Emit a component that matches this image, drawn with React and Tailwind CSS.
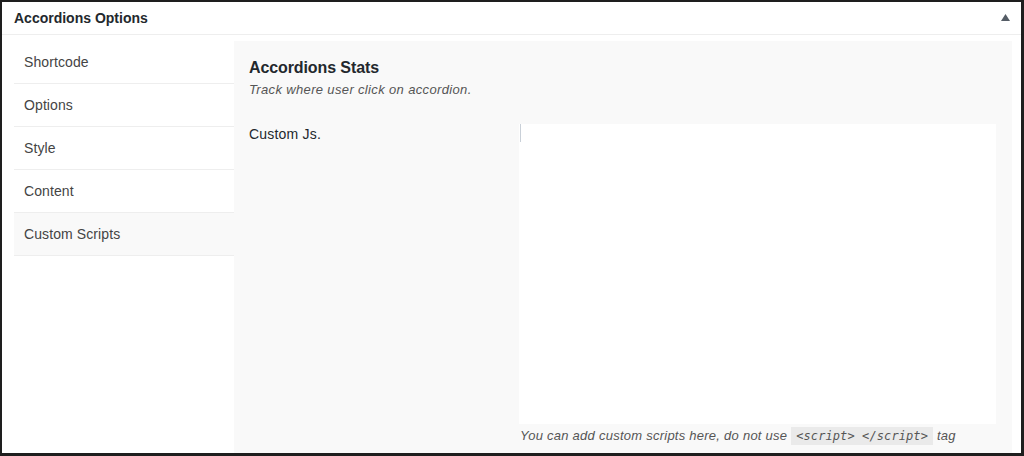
import React from 'react'

// ── Tabs ───────────────────────────────────────────────────────────────────────
const TABS = ['Shortcode', 'Options', 'Style', 'Content', 'Custom Scripts']
const ACTIVE = 'Custom Scripts'

const font = { fontFamily: '"Liberation Sans", Arial, sans-serif' }

export default function App() {
    return (
        <div
            className="w-[1024px] h-[456px] overflow-hidden bg-white border-l-2 border-t-2 border-r-[3px] border-b-[3px] border-[#1e1e1e] flex flex-col text-[#444]"
            style={font}
        >
            {/* ── Header ── */}
            <div className="h-[33px] shrink-0 flex items-center justify-between pl-[12px] pr-[11px] border-b border-[#eeeeee]">
                <h2 className="text-[14px] font-bold text-[#23282d]">Accordions Options</h2>
                <svg width="9" height="7" viewBox="0 0 9 7" className="mb-[1px]">
                    <path d="M4.5 0 L9 7 L0 7 Z" fill="#555d66" />
                </svg>
            </div>

            {/* ── Body ── */}
            <div className="flex flex-1 min-h-0 pl-[12px] pr-[9px]">
                {/* tabs */}
                <ul className="w-[220px] shrink-0 pt-[6px]">
                    {TABS.map(t => (
                        <li
                            key={t}
                            className={`h-[43px] flex items-center pl-[10px] border-b border-[#eeeeee] text-[14px] text-[#444] tracking-[0.1px] ${t === ACTIVE ? 'bg-[#f9f9f9]' : ''}`}
                        >
                            {t}
                        </li>
                    ))}
                </ul>

                {/* panel */}
                <div className="flex-1 mt-[6px] bg-[#f9f9f9] pl-[15px] pr-[16px] pt-[17px]">
                    <h3 className="text-[16px] font-bold text-[#23282d] leading-[20px] tracking-[-0.1px]">Accordions Stats</h3>
                    <p className="text-[13px] italic text-[#555] leading-[18px] mt-[3px] tracking-[0.35px]">Track where user click on accordion.</p>

                    <div className="flex mt-[25px]">
                        <div className="w-[270px] shrink-0 text-[14px] text-[#23282d] pt-[1px] leading-[18px] tracking-[0.2px]">Custom Js.</div>
                        <div className="flex-1 flex flex-col">
                            <div className="h-[300px] bg-white relative">
                                <span className="absolute left-[1px] top-0 w-px h-[18px] bg-[#c9d0d8]" />
                            </div>
                            <p className="text-[13px] italic text-[#555] mt-[3px] leading-[18px] pl-[1px] tracking-[0.25px]">
                                You can add custom scripts here, do not use{' '}
                                <code
                                    className="bg-[#eaeaea] px-[5px] py-[2px] text-[12px] text-[#555] tracking-[0.1px]"
                                    style={{ fontFamily: '"DejaVu Sans Mono", "Liberation Mono", monospace', fontStyle: 'italic' }}
                                >
                                    &lt;script&gt; &lt;/script&gt;
                                </code>{' '}
                                tag
                            </p>
                        </div>
                    </div>
                </div>
            </div>
        </div>
    )
}
